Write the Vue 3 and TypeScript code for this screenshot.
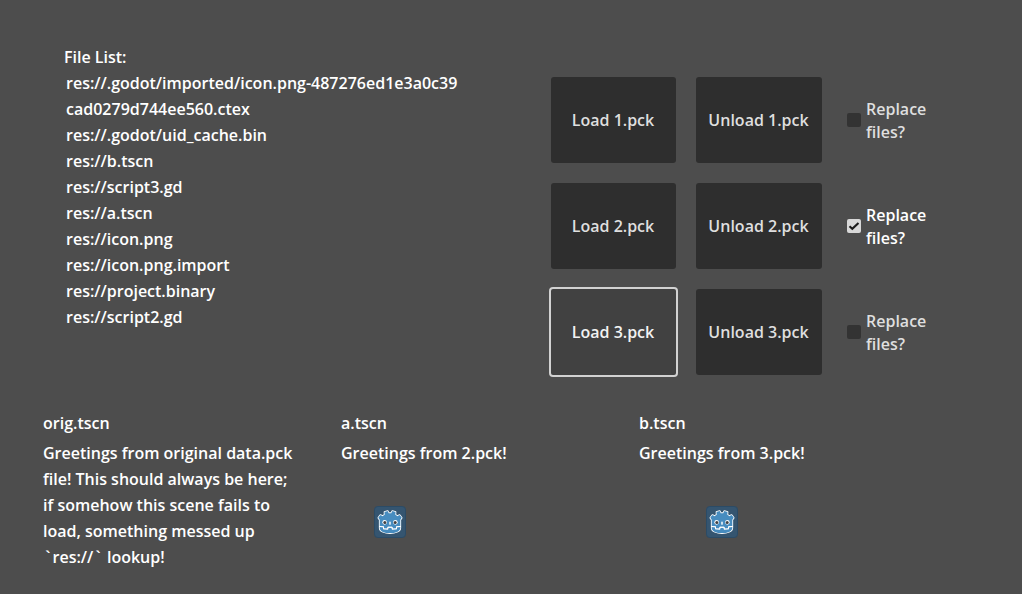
<script setup lang="ts">
interface Pack {
  id: number
  replace: boolean
  focused: boolean
}

interface Scene {
  name: string
  lines: string[]
  icon: 'none' | 'left' | 'center'
}

const files: string[] = [
  'res://.godot/imported/icon.png-487276ed1e3a0c39',
  'cad0279d744ee560.ctex',
  'res://.godot/uid_cache.bin',
  'res://b.tscn',
  'res://script3.gd',
  'res://a.tscn',
  'res://icon.png',
  'res://icon.png.import',
  'res://project.binary',
  'res://script2.gd',
]

const packs: Pack[] = [
  { id: 1, replace: false, focused: false },
  { id: 2, replace: true, focused: false },
  { id: 3, replace: false, focused: true },
]

const scenes: Scene[] = [
  {
    name: 'orig.tscn',
    lines: [
      'Greetings from original data.pck',
      'file! This should always be here;',
      'if somehow this scene fails to',
      'load, something messed up',
      '`res://` lookup!',
    ],
    icon: 'none',
  },
  { name: 'a.tscn', lines: ['Greetings from 2.pck!'], icon: 'left' },
  { name: 'b.tscn', lines: ['Greetings from 3.pck!'], icon: 'center' },
]

// Backticks are set wider than the rest of the text, so they get their own spans.
const parts = (line: string): string[] => line.split(/(`)/).filter((p) => p !== '')
</script>

<template>
  <main class="screen">
    <section class="top">
      <div class="files">
        <div class="heading">File List:</div>
        <ul class="list">
          <li v-for="file in files" :key="file">{{ file }}</li>
        </ul>
      </div>
      <div class="packs">
        <template v-for="pack in packs" :key="pack.id">
          <button class="btn load" :class="{ focused: pack.focused }">Load {{ pack.id }}.pck</button>
          <button class="btn unload">Unload {{ pack.id }}.pck</button>
          <label class="check" :class="{ on: pack.replace }">
            <svg class="box" viewBox="0 0 14 14">
              <rect width="14" height="14" rx="2" :fill="pack.replace ? '#d8d8d8' : '#333333'" />
              <path v-if="pack.replace" d="M2.5 7.2 5.3 9.8 11.5 3.9" fill="none" stroke="#1a1a1a" stroke-width="2.1" />
            </svg>
            <span class="caption">Replace<br />files?</span>
          </label>
        </template>
      </div>
    </section>

    <section class="scenes">
      <article v-for="scene in scenes" :key="scene.name" class="scene">
        <div class="name">{{ scene.name }}</div>
        <div v-for="line in scene.lines" :key="line" class="line"><span v-for="(part, i) in parts(line)" :key="i" :class="{ tick: part === '`' }">{{ part }}</span></div>
        <svg v-if="scene.icon !== 'none'" class="logo" :class="scene.icon" viewBox="0 0 128 128">
          <rect x="2" y="2" width="124" height="124" rx="13" fill="#355570" stroke="#2b4b66" stroke-width="4" />
          <g transform="translate(12.322 12.322) scale(.101)">
            <path
              class="outline"
              d="M105 427q-30-39-56-81 35-59 83-108 43 20 82 47 40-37 88-64-7-51-8-102 59-28 123-42 26 43 46 89 49-7 98 0 20-46 46-89 64 14 123 42-1 51-8 102 48 27 88 64 39-27 82-47 48 49 83 108-26 42-56 81v318c-1 276-814 276-814 0z"
            />
            <path fill="#fff" d="M105 673v33q407 354 814 0v-33z" />
            <path
              fill="#478cbf"
              d="m105 673 152 14q12 1 15 14l4 67 132 10 8-61q2-11 15-15h162q13 4 15 15l8 61 132-10 4-67q3-13 15-14l152-14V427q30-39 56-81-35-59-83-108-43 20-82 47-40-37-88-64 7-51 8-102-59-28-123-42-26 43-46 89-49-7-98 0-20-46-46-89-64 14-123 42 1 51 8 102-48 27-88 64-39-27-82-47-48 49-83 108 26 42 56 81zm0 33v39c0 276 813 276 814 0v-39l-134 12-5 69q-2 10-14 13l-162 11q-12 0-16-11l-10-65H446l-10 65q-4 11-16 11l-162-11q-12-3-14-13l-5-69z"
            />
            <path
              class="mouth"
              d="m105 690 147 14 8 78 160 11 11-75h162l11 75 160-11 8-78 147-14"
            />
            <path fill="#fff" d="M483 600c0 34 58 34 58 0v-86c0-34-58-34-58 0z" />
            <circle cx="725" cy="526" r="90" fill="#fff" />
            <circle cx="299" cy="526" r="90" fill="#fff" />
            <circle cx="717" cy="532" r="60" fill="#414042" />
            <circle cx="307" cy="532" r="60" fill="#414042" />
          </g>
        </svg>
      </article>
    </section>
  </main>
</template>

<style>
body {
  background: #4d4d4d;
}
</style>

<style scoped>
.screen {
  box-sizing: border-box;
  width: 1022px;
  height: 594px;
  overflow: hidden;
  background: #4d4d4d;
  color: #fff;
  font: 600 16px/26px 'Open Sans', 'Noto Sans', sans-serif;
  white-space: nowrap;
}
.top {
  display: flex;
  height: 410px;
}
.files {
  width: 487px;
  padding: 44px 0 0 64px;
}
.list {
  list-style: none;
  margin: 0;
  padding: 0 0 0 2px;
}
.packs {
  display: grid;
  grid-template-columns: 125px 126px 90px;
  grid-auto-rows: 86px;
  column-gap: 20px;
  row-gap: 20px;
  align-content: start;
  padding-top: 77px;
}
.btn {
  border: 0;
  border-radius: 3px;
  padding: 0 1px 0 0;
  background: #2e2e2e;
  color: #dfdfdf;
  font: inherit;
}
.btn.focused {
  border-radius: 2px;
  background: #414141;
  color: #f2f2f2;
  box-shadow: 0 0 0 2px #d2d2d2;
}
.check {
  display: flex;
  align-items: center;
  gap: 5px;
  padding-left: 5px;
  color: #dfdfdf;
  line-height: 23px;
}
.check.on {
  color: #fff;
}
.caption {
  padding-top: 2px;
}
.box {
  width: 14px;
  height: 14px;
  flex: none;
}
.scenes {
  display: grid;
  grid-template-columns: repeat(3, 298px);
  padding-left: 43px;
}
.name {
  margin-bottom: 4px;
}
.tick {
  padding: 0 2.2px;
}
.logo {
  display: block;
  width: 32px;
  height: 32px;
  margin-top: 40px;
}
.logo.left {
  margin-left: 33px;
}
.logo.center {
  margin-left: 67px;
}
.outline {
  fill: #fff;
  stroke: #fff;
  stroke-width: 68;
  stroke-linejoin: round;
}
.mouth {
  fill: none;
  stroke: #fff;
  stroke-width: 40;
  stroke-linejoin: round;
}
</style>
